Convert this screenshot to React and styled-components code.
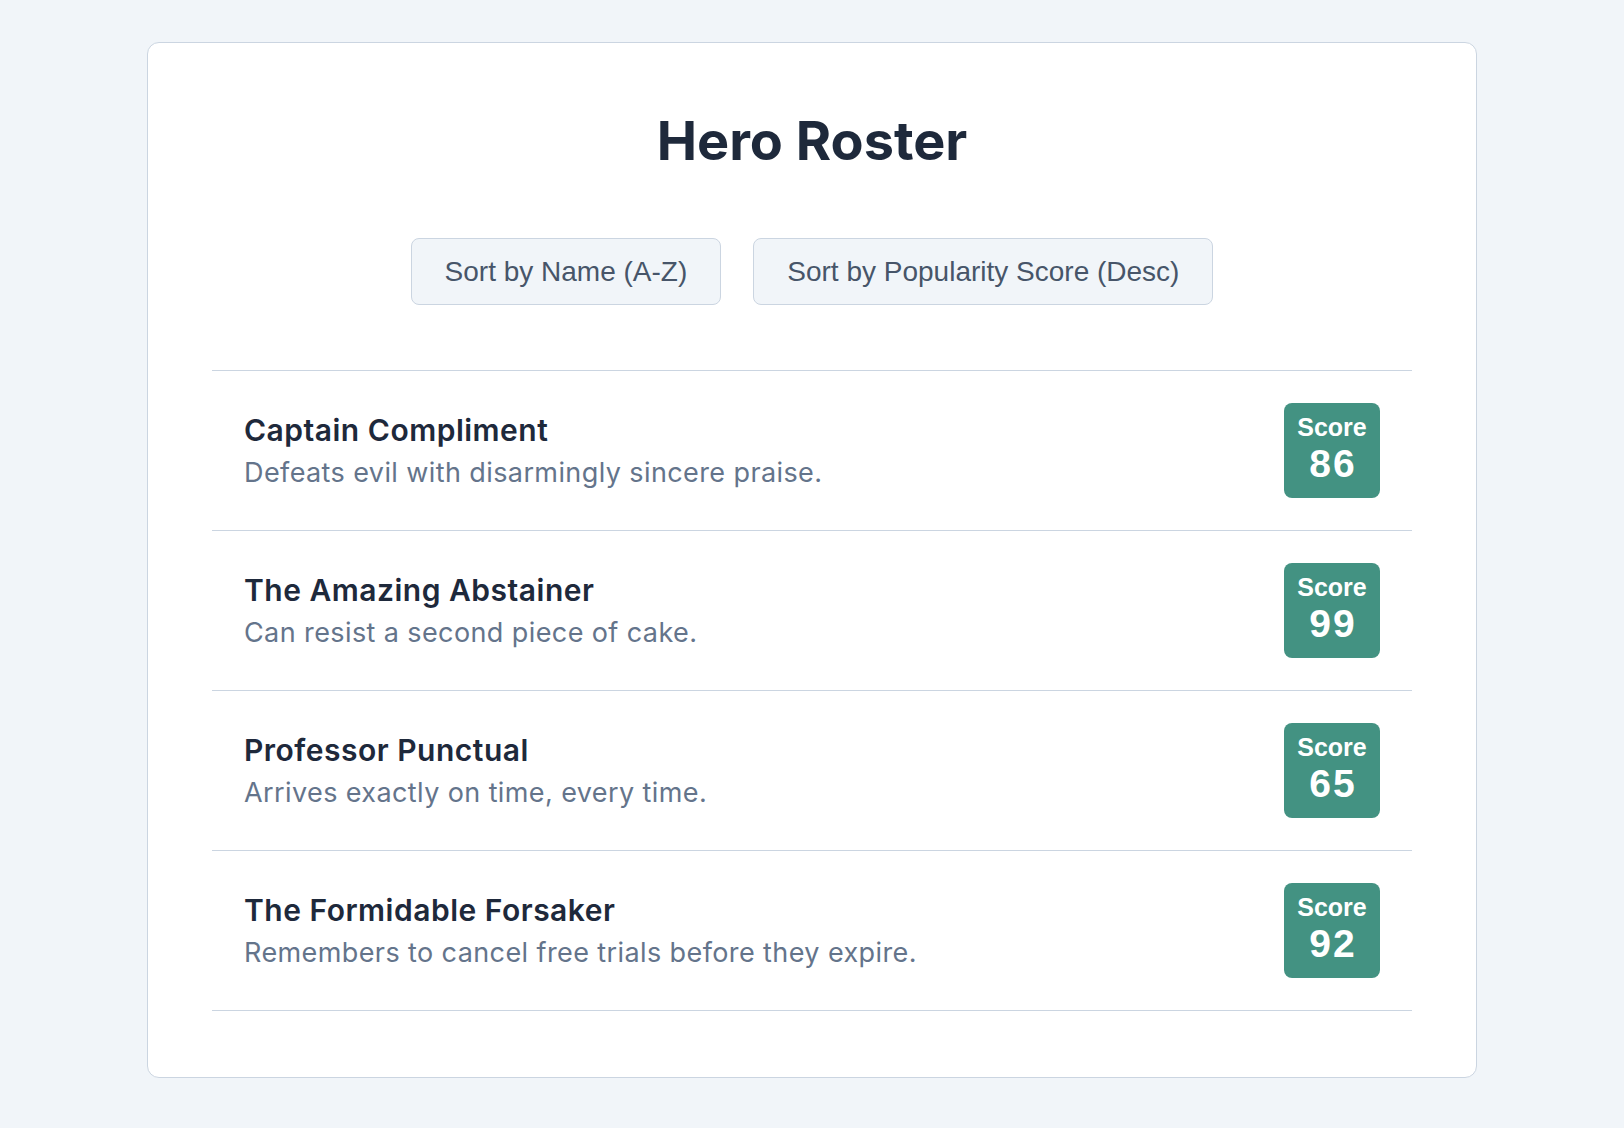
import React from 'react'
import styled, { createGlobalStyle } from 'styled-components'

const heroes = [
  { name: 'Captain Compliment', power: 'Defeats evil with disarmingly sincere praise.', score: 86 },
  { name: 'The Amazing Abstainer', power: 'Can resist a second piece of cake.', score: 99 },
  { name: 'Professor Punctual', power: 'Arrives exactly on time, every time.', score: 65 },
  { name: 'The Formidable Forsaker', power: 'Remembers to cancel free trials before they expire.', score: 92 },
]

const GlobalStyle = createGlobalStyle`
  html, body {
    margin: 0;
    background: #f1f5f9;
  }
  body {
    font-family: Inter, "Noto Sans", sans-serif;
  }
`

const Page = styled.div`
  padding: 42px 0;
  display: flex;
  justify-content: center;
`

const Card = styled.div`
  width: 1200px;
  padding: 64px 64px 66px;
  background: #ffffff;
  border: 1px solid #cbd5e1;
  border-radius: 12px;
`

const Title = styled.h1`
  margin: 0 0 64px;
  text-align: center;
  font-size: 54px;
  line-height: 67px;
  font-weight: 700;
  color: #1e293b;
`

const Toolbar = styled.div`
  display: flex;
  justify-content: center;
  gap: 32px;
  margin-bottom: 65px;
`

const SortButton = styled.button`
  font-family: "Liberation Sans", Arial, sans-serif;
  font-size: 28px;
  line-height: 33px;
  padding: 16px 33px;
  color: #475569;
  background: #f1f5f9;
  border: 1px solid #cbd5e1;
  border-radius: 8px;
  cursor: pointer;
`

const List = styled.ul`
  list-style: none;
  margin: 0;
  padding: 0;
  border-top: 1px solid #cbd5e1;
`

const Item = styled.li`
  display: flex;
  align-items: center;
  justify-content: space-between;
  padding: 32px;
  border-bottom: 1px solid #cbd5e1;
`

const Info = styled.div`
  display: flex;
  flex-direction: column;
`

const Name = styled.div`
  font-size: 30px;
  line-height: 36px;
  font-weight: 600;
  letter-spacing: 0.5px;
  color: #1e293b;
  margin-bottom: 7px;
`

const Power = styled.div`
  font-size: 27px;
  line-height: 35px;
  letter-spacing: 0.4px;
  color: #64748b;
`

const Badge = styled.div`
  display: flex;
  flex-direction: column;
  align-items: center;
  min-width: 72px;
  padding: 8px 12px 14px;
  background: #439282;
  color: #ffffff;
  border-radius: 8px;
  font-family: "Liberation Sans", Arial, sans-serif;
  font-weight: 700;
`

const BadgeLabel = styled.span`
  font-size: 25px;
  line-height: 32px;
`

const BadgeValue = styled.span`
  font-size: 39px;
  line-height: 41px;
  letter-spacing: 2px;
  margin-right: -2px;
`

export default function App() {
  return (
    <>
      <GlobalStyle />
      <Page>
        <Card>
          <Title>Hero Roster</Title>
          <Toolbar>
            <SortButton>Sort by Name (A-Z)</SortButton>
            <SortButton>Sort by Popularity Score (Desc)</SortButton>
          </Toolbar>
          <List>
            {heroes.map((h) => (
              <Item key={h.name}>
                <Info>
                  <Name>{h.name}</Name>
                  <Power>{h.power}</Power>
                </Info>
                <Badge>
                  <BadgeLabel>Score</BadgeLabel>
                  <BadgeValue>{h.score}</BadgeValue>
                </Badge>
              </Item>
            ))}
          </List>
        </Card>
      </Page>
    </>
  )
}
